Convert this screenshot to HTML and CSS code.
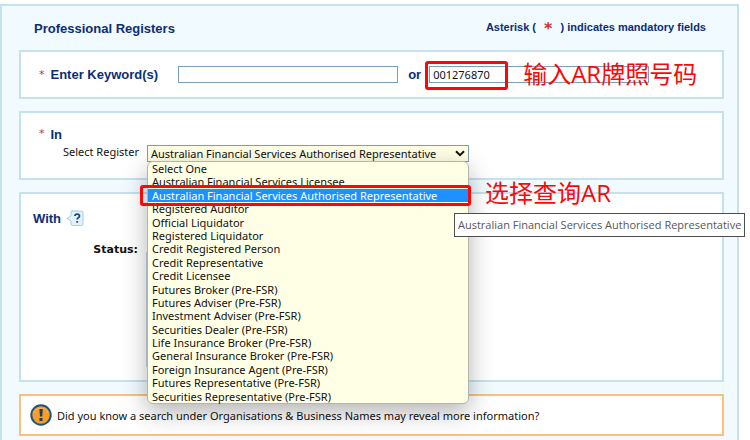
FILE: index.html
```html
<!DOCTYPE html>
<html lang="en">
<head>
  <meta charset="UTF-8">
  <meta name="viewport" content="width=device-width, initial-scale=1.0">
  <title>Professional Registers</title>
  <link rel="stylesheet" href="styles.css">
</head>
<body>
  <form class="search-form">
    <div class="form-header">
      <h1>Professional Registers</h1>
      <p class="mandatory">Asterisk ( <span class="star">*</span> ) indicates mandatory fields</p>
    </div>

    <!-- Keyword -->
    <div class="panel keyword-panel">
      <span class="star">*</span>
      <label class="heading keyword-label" for="keyword">Enter Keyword(s)</label>
      <input type="text" id="keyword" name="keyword">
      <label class="heading or-label" for="number">or</label>
      <div class="number-field">
        <input type="text" id="number" name="number" value="001276870">
        <span class="mark number-mark"></span>
        <span class="note number-note" lang="zh">输入AR牌照号码</span>
      </div>
    </div>

    <!-- Register -->
    <div class="panel register-panel">
      <div class="register-title"><span class="star">*</span><span class="heading">In</span></div>
      <div class="field-row">
        <label class="field-label" for="register">Select Register</label>
        <div class="dropdown">
          <select id="register" name="register">
            <option>Australian Financial Services Authorised Representative</option>
          </select>
          <svg class="arrow" viewBox="0 0 10 7" width="10" height="7"><path d="M1 1.2 5 5.2 9 1.2" fill="none" stroke="#111" stroke-width="2"/></svg>
          <ul class="options" role="listbox" aria-label="Select Register">
            <li role="option">Select One</li>
            <li role="option">Australian Financial Services Licensee</li>
            <li role="option" class="selected" aria-selected="true">Australian Financial Services Authorised Representative</li>
            <li role="option">Registered Auditor</li>
            <li role="option">Official Liquidator</li>
            <li role="option">Registered Liquidator</li>
            <li role="option">Credit Registered Person</li>
            <li role="option">Credit Representative</li>
            <li role="option">Credit Licensee</li>
            <li role="option">Futures Broker (Pre-FSR)</li>
            <li role="option">Futures Adviser (Pre-FSR)</li>
            <li role="option">Investment Adviser (Pre-FSR)</li>
            <li role="option">Securities Dealer (Pre-FSR)</li>
            <li role="option">Life Insurance Broker (Pre-FSR)</li>
            <li role="option">General Insurance Broker (Pre-FSR)</li>
            <li role="option">Foreign Insurance Agent (Pre-FSR)</li>
            <li role="option">Futures Representative (Pre-FSR)</li>
            <li role="option">Securities Representative (Pre-FSR)</li>
          </ul>
          <span class="mark option-mark"></span>
          <span class="note option-note" lang="zh">选择查询AR</span>
          <span class="tooltip" role="tooltip">Australian Financial Services Authorised Representative</span>
        </div>
      </div>
    </div>

    <!-- Status -->
    <div class="panel status-panel">
      <div class="status-title">
        <span class="heading">With</span>
        <svg class="help" viewBox="0 0 18 17" width="18" height="17">
          <path d="M5.500 1h10q1.500 0 1.500 1.500v11.500q0 1.500-1.500 1.500h-9q-1.500 0-1.500-1.500v-3L.8 8.500 5 6V2.500Q5 1 6.500 1z" fill="#e2f1fa" stroke="#9ccfe8"/>
          <path d="M8.800 6q.2-1.800 2.400-1.800t2.300 1.700q0 1.200-1.200 1.800-1.100.6-1.100 1.800M11.200 11v1.800" fill="none" stroke="#1d4380" stroke-width="1.700"/>
        </svg>
      </div>
      <div class="field-row">
        <label class="field-label status-label" for="status">Status:</label>
        <select class="status-list" id="status" name="status" multiple></select>
      </div>
    </div>

    <div class="panel info-panel">
      <svg class="info" viewBox="0 0 22 22" width="22" height="22">
        <circle cx="11" cy="11" r="9.700" fill="#f79c26" stroke="#1c5484" stroke-width="2"/>
        <path d="M4 9a7.500 7.500 0 0 1 14 0" fill="none" stroke="#fbb95c"/>
        <path d="M9.400 5h3.400l-.6 7.500H10z" fill="#173e66"/>
        <rect x="9.500" y="14" width="3" height="3" fill="#173e66"/>
      </svg>
      <span>Did you know a search under Organisations &amp; Business Names may reveal more information?</span>
    </div>
  </form>
</body>
</html>
```
FILE: styles.css
```css
* {
  box-sizing: border-box;
}

body {
  margin: 0;
  padding: 4px 11px 0 0;
  background-color: #fff;
  color: #111;
  font-family: "Noto Sans", sans-serif;
  font-size: 11px;
  line-height: 13px;
  overflow: hidden;
}

.search-form {
  display: flex;
  flex-direction: column;
  gap: 12px;
  padding: 0 13px 12px 17px;
  border: 2px solid #c5e0ef;
  background-color: #f0faff;
}

.form-header {
  display: flex;
  justify-content: space-between;
  align-items: center;
  height: 32px;
  padding: 12px 18px 0 15px;
}

h1,
.mandatory,
.heading {
  margin: 0;
  color: #0b2e76;
  font-family: "Liberation Sans", Arial, sans-serif;
  font-weight: bold;
}

h1,
.heading {
  font-size: 13px;
  line-height: 15px;
}

.mandatory {
  font-size: 11px;
}

.star {
  color: #c8322b;
  font-family: "DejaVu Sans", sans-serif;
}

.mandatory .star {
  margin: 0 5px;
  font-size: 16px;
  line-height: 12px;
  vertical-align: middle;
}

.panel {
  border: 2px solid #c5e0ef;
  background-color: #fff;
}

.keyword-panel {
  display: flex;
  align-items: center;
  height: 49px;
  padding-left: 18px;
}

.keyword-label {
  margin: 0 20px 0 6px;
}

.or-label {
  margin: 0 8px 0 10px;
}

input {
  width: 220px;
  height: 17px;
  padding: 0 3px;
  border: 1px solid #7b9ebd;
  background-color: #fff;
  color: #111;
  font: 11px "Noto Sans", sans-serif;
}

.number-field {
  display: flex;
  position: relative;
}

/* Red annotations */
.mark {
  position: absolute;
  border: 3px solid #fb0707;
  border-radius: 3px;
}

.number-mark {
  top: -5px;
  left: -4px;
  width: 83px;
  height: 29px;
}

.note {
  position: absolute;
  color: #fb0707;
  font-family: "Open Sans", "Noto Sans CJK SC", sans-serif;
  font-size: 24px;
  font-weight: 400;
  line-height: 24px;
  white-space: nowrap;
}

.number-note {
  top: -4px;
  left: 94px;
}

.register-panel {
  height: 69px;
  padding: 14px 0 0 18px;
}

.register-title {
  display: flex;
  gap: 6px;
  height: 18px;
}

.field-row {
  display: flex;
}

.field-label {
  flex-shrink: 0;
  width: 108px;
  padding-right: 8px;
  text-align: right;
}

.dropdown {
  position: relative;
  width: 322px;
}

.dropdown select {
  display: block;
  width: 100%;
  height: 17px;
  padding: 0 3px;
  border: 1px solid #7b9ebd;
  border-radius: 0;
  background-color: #ffffe6;
  color: #111;
  font: 11px "Noto Sans", sans-serif;
  appearance: none;
}

.arrow {
  position: absolute;
  top: 5px;
  right: 4px;
}

.options {
  display: grid;
  grid-auto-rows: 1fr;
  position: absolute;
  top: 16px;
  left: 0;
  z-index: 1;
  width: 100%;
  height: 243px;
  margin: 0;
  padding: 0;
  border: 1px solid #b5b5ad;
  border-radius: 6px;
  background-color: #ffffe6;
  box-shadow: 0 8px 24px rgba(0, 0, 0, 0.3);
  list-style: none;
}

.options li {
  padding-left: 4px;
  line-height: 13px;
}

.options .selected {
  background-color: #1e90ff;
  color: #fff;
}

.option-mark {
  top: 40px;
  left: -7px;
  z-index: 2;
  width: 331px;
  height: 21px;
}

.option-note {
  top: 36px;
  left: 338px;
  z-index: 2;
}

.tooltip {
  position: absolute;
  top: 68px;
  left: 307px;
  z-index: 3;
  padding: 0 3px;
  border: 1px solid #4d4d4d;
  background-color: #fff;
  color: #575757;
  font-family: "Open Sans", sans-serif;
  font-size: 11px;
  line-height: 22px;
  white-space: nowrap;
}

.status-panel {
  height: 190px;
  padding: 16px 0 0 12px;
}

.status-title {
  display: flex;
  align-items: center;
  gap: 5px;
  height: 17px;
  margin-bottom: 16px;
}

.status-label {
  width: 113px;
  font-family: "DejaVu Sans", sans-serif;
  font-weight: bold;
}

.status-list {
  width: 323px;
  height: 115px;
  margin-top: 9px;
  border: 1px solid #c5d5e2;
  border-radius: 0;
  background-color: #fff;
}

.info-panel {
  display: flex;
  align-items: center;
  gap: 5px;
  height: 42px;
  padding-left: 9px;
  border-color: #fcc078;
}
```
